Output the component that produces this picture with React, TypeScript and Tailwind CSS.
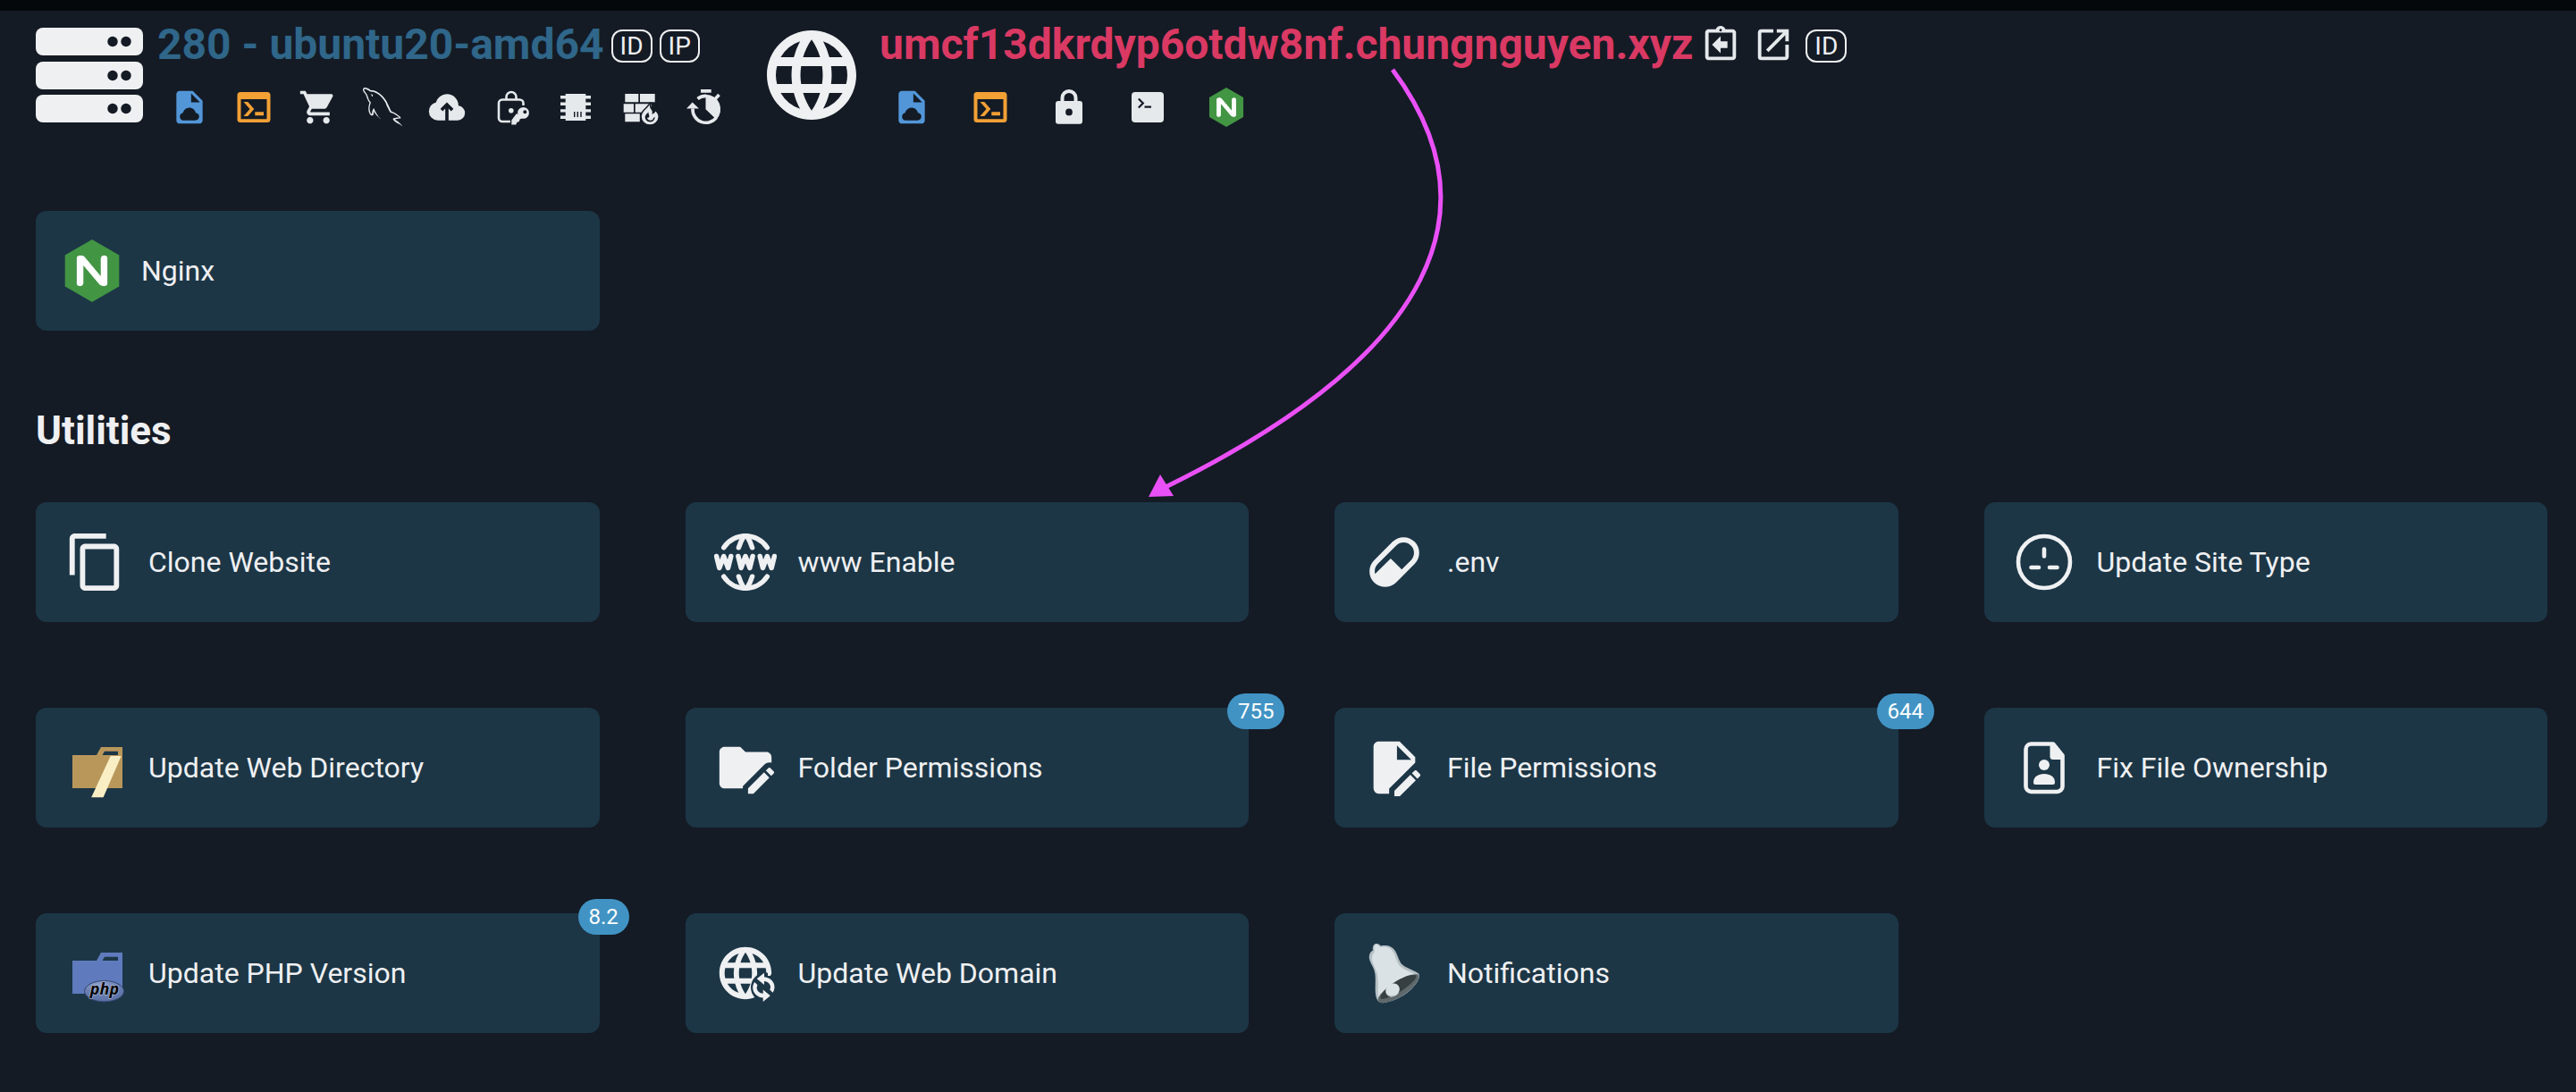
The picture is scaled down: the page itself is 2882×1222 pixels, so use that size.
import type { ReactNode } from "react";
import { MdContentCopy, MdLanguage, MdOpenInNew, MdOutlineAssignmentReturn, MdShoppingCart } from "react-icons/md";
import { GrMysql } from "react-icons/gr";
import { SiNginx } from "react-icons/si";
import { TbWorldWww } from "react-icons/tb";

const BG = "#141b25";
const CARD = "#1c3646";

function Small({ children, box = "0 0 44 44" }: { children: ReactNode; box?: string }) {
  return (
    <svg viewBox={box} className="size-11" fill="currentColor" aria-hidden="true">
      {children}
    </svg>
  );
}

function Large({ children, box = "0 0 70 70" }: { children: ReactNode; box?: string }) {
  return (
    <svg viewBox={box} className="size-[70px] shrink-0" fill="currentColor" aria-hidden="true">
      {children}
    </svg>
  );
}

const FileCloud = () => (
  <Small box="0 0 24 24">
    <path
      fill="#5296d8"
      fillRule="evenodd"
      d="M6 2C4.900 2 4 2.900 4 4v16c0 1.100.9 2 2 2h12c1.100 0 2-.9 2-2V8l-6-6H6Zm7 1.600L18.400 9H13V3.600ZM8.300 20C7 20 6.100 19 6.100 17.700c0-1.200.8-2.100 1.900-2.300.6-1.900 2-3.100 3.900-3.100 2 0 3.500 1.300 3.900 3.100 1.200.1 2.100 1 2.100 2.200 0 1.400-1 2.400-2.400 2.400H8.300Z"
    />
  </Small>
);

const TerminalWindow = () => (
  <Small>
    <path
      fill="#f3a035"
      fillRule="evenodd"
      d="M7 5h30a3.500 3.500 0 0 1 3.500 3.500v27A3.500 3.500 0 0 1 37 39H7a3.500 3.500 0 0 1-3.500-3.500v-27A3.500 3.500 0 0 1 7 5Zm.5 8v22.300h29V13h-29Z"
    />
    <path fill="#f3a035" d="M10.500 16h4.800l7 8-7 8h-4.800l7-8zM23.300 27.300H33v4h-9.700z" />
  </Small>
);

const CloudUpload = () => (
  <Small box="0 0 24 24">
    <path d="M11 20H6.500Q4.220 20 2.610 18.430 1 16.850 1 14.580 1 12.630 2.170 11.100 3.350 9.570 5.250 9.150 5.880 6.850 7.750 5.430 9.630 4 12 4 14.930 4 16.960 6.040 19 8.070 19 11 20.730 11.200 21.860 12.500 23 13.780 23 15.500 23 17.380 21.690 18.690 20.380 20 18.500 20H13V12.850L14.600 14.400 16 13 12 9 8 13 9.400 14.400 11 12.850Z" />
  </Small>
);

const LockKey = () => (
  <Small>
    <path
      fill="none"
      stroke="currentColor"
      strokeWidth="2.600"
      d="M35.500 20v-2.500a4 4 0 0 0-4-4H12a4 4 0 0 0-4 4v16.500a4 4 0 0 0 4 4h9M16.500 13v-2.500a5.500 5.500 0 0 1 11 0V13"
    />
    <circle cx="21.800" cy="25.800" r="2.800" />
    <path d="M28 29 22.300 36.500v5h5l1-2.500 2.500-1 .8-2.500 3-1.500z" />
    <path fillRule="evenodd" d="M35.500 22a6.400 6.400 0 1 0 0 12.800 6.400 6.400 0 0 0 0-12.800Zm1.800 3.200a2 2 0 1 1 0 4 2 2 0 0 1 0-4Z" />
  </Small>
);

const Chip = () => (
  <Small>
    <path d="M10.700 7h22.600v30H10.700zM5 9h34v3.400H5zM5 16.600h34V20H5zM5 24.300h34v3.300H5zM5 31.600h34V35H5z" />
    <path stroke={BG} strokeWidth="1.400" d="M20.700 27v6M24.300 27v6M28 27v6" />
  </Small>
);

const Firewall = () => (
  <Small>
    <path d="M5.300 7h15v9.300h-15zM22 7h16.700v9.300H22zM3.700 18.300H15v9.400H3.700zM16.700 18.300h18v9.400h-18zM5.300 29.300h16.500v9H5.300z" />
    <path
      stroke={BG}
      strokeWidth="1.500"
      d="M34.500 16.500c-1.500 3-1 5.500.8 7.800 1 1.300 1.800 2.400 1.200 4.200 1.500-.6 2.300-1.700 2.300-3.500 2.700 2.300 4.400 4.900 4.400 7.500 0 5.300-4.500 9.500-10 9.500s-10.200-4.200-10.200-9.500c0-5.600 4.300-8 6.500-10.500 1.700-1.900 3-3.800 5-5.500Z"
    />
    <path
      fill={BG}
      d="M31.500 27.500c-.5 2 1.300 3 .8 4.900-.3 1.300-1.500 1.800-2.400 1.200.3 1.900 1.600 3.200 3.600 3.200 2.100 0 3.500-1.300 3.500-3.100.9.3 1.400-.2 1.600-1.100.3 3.400-2 5.900-5.200 5.900-3.300 0-5.700-2.400-5.700-5.400 0-2.500 2.100-4 3.800-5.600Z"
    />
  </Small>
);

const Stopwatch = () => (
  <Small>
    <path d="M18 2h11.700v3.700H18zM8.700 16.500 16 23.500H2zM23.500 24.300V7.800a16.500 16.500 0 0 1 12 28z" />
    <path fill="none" stroke="currentColor" strokeWidth="3.600" d="M9 23.500a14.800 14.800 0 0 0 26.500 10M14.500 12.500A15 15 0 0 1 24 9.400M33.500 13.500l5-5.500" />
  </Small>
);

const Padlock = () => (
  <Small>
    <path
      fillRule="evenodd"
      d="M10 15h24a3 3 0 0 1 3 3v19.700a3 3 0 0 1-3 3H10a3 3 0 0 1-3-3V18a3 3 0 0 1 3-3Zm12 8.500a3.900 3.900 0 1 0 0 7.800 3.900 3.900 0 0 0 0-7.800Z"
    />
    <path fill="none" stroke="currentColor" strokeWidth="4" d="M14.500 17v-5.500a7.500 7.500 0 0 1 15 0V17" />
  </Small>
);

const TerminalSolid = () => (
  <Small>
    <rect x="4" y="5" width="36" height="34" rx="4" />
    <path fill="none" stroke={BG} strokeWidth="2.200" d="m11.800 12.500 5 5-5 5M18.500 21.700h7.500" />
  </Small>
);

const NginxLogo = ({ className }: { className: string }) => (
  <span className={`grid shrink-0 place-items-center ${className}`}>
    <svg viewBox="1.500 0 21 24" className="h-full w-full" aria-hidden="true">
      <rect x="6" y="6" width="12" height="12" fill="#fff" />
      <SiNginx x="0" y="0" size="24" color="#429543" />
    </svg>
  </span>
);

const Server = () => (
  <svg viewBox="0 0 120 120" className="size-[120px] shrink-0" aria-hidden="true">
    {[7, 45, 82].map((y) => (
      <g key={y}>
        <rect x="0" y={y} width="120" height="31" rx="8" fill="#eff0f2" />
        <circle cx="86" cy={y + 15.500} r="5.700" fill={BG} />
        <circle cx="101" cy={y + 15.500} r="5.700" fill={BG} />
      </g>
    ))}
  </svg>
);

const Pill = () => (
  <Large box="0 0 24 24">
    <path
      fillRule="evenodd"
      d="M4.220 11.290 11.290 4.220C13.640 1.880 17.430 1.880 19.780 4.220 22.120 6.560 22.120 10.360 19.780 12.710L12.710 19.780C10.360 22.120 6.560 22.120 4.220 19.780 1.880 17.430 1.880 13.640 4.220 11.290M5.640 12.710C4.590 13.750 4.240 15.240 4.600 16.570L10.590 10.590 14.830 14.830 18.360 11.290C19.930 9.730 19.930 7.200 18.360 5.640 16.800 4.070 14.270 4.070 12.710 5.640L5.640 12.710Z"
    />
  </Large>
);

const Socket = () => (
  <Large>
    <g fill="none" stroke="currentColor" strokeWidth="4.600" strokeLinecap="round">
      <circle cx="35" cy="35" r="29" />
      <path d="M35 20.500v8M20.500 41h8.500M41 41h8.500" />
    </g>
  </Large>
);

const FolderShape = ({ color }: { color: string }) => (
  <path fill={color} fillRule="evenodd" d="M9 21h27l5-9h24v46H9zM42.500 21H60v-4.300H45z" />
);

const SlashFolder = () => (
  <Large>
    <FolderShape color="#b9975b" />
    <path fill="#faefc4" d="M51.700 21.900h12L43.600 68.300H30.200z" />
  </Large>
);

const PhpFolder = () => (
  <Large>
    <defs>
      <radialGradient id="php-oval" cx="0.4" cy="0.2" r="0.900">
        <stop offset="0" stopColor="#8fa3cc" />
        <stop offset="0.5" stopColor="#6a80b3" />
        <stop offset="1" stopColor="#566c9f" />
      </radialGradient>
    </defs>
    <FolderShape color="#5f7bbd" />
    <ellipse cx="44.600" cy="55.200" rx="22" ry="11.700" fill="url(#php-oval)" stroke="#34466e" strokeWidth="1" />
    <text
      x="45"
      y="59"
      textAnchor="middle"
      fontSize="18"
      fontWeight="700"
      fontStyle="italic"
      fontFamily="Open Sans, sans-serif"
      fill="#000"
      stroke="#c5cfe4"
      strokeWidth="1"
      paintOrder="stroke"
    >
      php
    </text>
  </Large>
);

const FolderEdit = () => (
  <Large box="0 0 24 24">
    <path d="M19.390 10.740 11 19.130V20H4C2.900 20 2 19.110 2 18V6C2 4.890 2.890 4 4 4H10L12 6H20C21.100 6 22 6.890 22 8V10.150C21.740 10.060 21.460 10 21.170 10 20.500 10 19.870 10.260 19.390 10.740M13 19.960V22H15.040L21.170 15.880 19.130 13.830 13 19.960M22.850 13.470 21.530 12.150C21.330 11.950 21 11.950 20.810 12.150L19.830 13.130 21.870 15.170 22.850 14.190C23.050 14 23.050 13.670 22.850 13.470Z" />
  </Large>
);

const FileEdit = () => (
  <Large box="0 0 24 24">
    <path
      fillRule="evenodd"
      d="M6 2C4.890 2 4 2.890 4 4V20A2 2 0 0 0 6 22H10V20.090L20 10.090V8L14 2H6M13 3.500 18.500 9H13V3.500M20.150 13C20 13 19.860 13.050 19.750 13.160L18.730 14.180 20.820 16.260 21.840 15.250C22.050 15.030 22.050 14.670 21.840 14.460L20.540 13.160C20.430 13.050 20.290 13 20.150 13M18.140 14.770 12 20.920V23H14.080L20.230 16.850 18.140 14.770Z"
    />
  </Large>
);

const FilePerson = () => (
  <Large>
    <path
      fill="none"
      stroke="currentColor"
      strokeWidth="4.600"
      strokeLinejoin="round"
      d="M20 8.500h25l10.500 13v34.500a6 6 0 0 1-6 6H20.500a6 6 0 0 1-6-6V14.500a6 6 0 0 1 6-6z"
    />
    <path d="M41.500 9H46l11 14v3H45a3.500 3.500 0 0 1-3.500-3.500z" />
    <circle cx="35" cy="32" r="6" />
    <path d="M23 51.500c0-6 5-9.500 12-9.500s12 3.500 12 9.500c0 1.700-.8 2.500-2.500 2.500h-19c-1.700 0-2.500-.8-2.500-2.500Z" />
  </Large>
);

const WebSync = () => (
  <Large>
    <MdLanguage size="70" x="0" y="0" />
    <circle cx="57.500" cy="51" r="16.500" fill={CARD} />
    <path d="M60 33.500 64.200 35 63 38H60z" />
    <path d="M47.700 41.300 56 34.700v4.500c6.500.5 11.500 5.300 11.500 11.300 0 2.300-.7 4.500-2 6.300l-3.300-3.300c.5-.9.8-1.900.8-3 0-3.400-3-6.200-7-6.600v4z" />
    <path d="M62.800 60.300 54.700 67v-4.500c-6.500-.5-11.500-5.300-11.500-11.300 0-2.300.7-4.500 2-6.300l3.300 3.300c-.5.9-.8 1.900-.8 3 0 3.400 3 6.200 7 6.600v-4.300z" />
  </Large>
);

const Bell = () => (
  <Large>
    <path fill="#b4bfc4" d="M14.500 2c3-.5 4 1.500 5.500 2.500 3.500-.8 7.500-.5 10 .5 5 2.500 7 6 9.300 12.500 2 5.500 3.700 8 8.200 10.500 6 3 10.500 4.500 14 7 2.500 2 1.500 6-1 10-7 11-21 20.500-36.500 23-5 .8-7.500-.5-9-5-2.500-8-.5-17-1.500-26.500C12.500 28 8 24.500 7 19c-.8-4.500 1-8 4-9.500-.5-3 0-7 3.500-7.500Z" />
    <path fill="#dbe2e5" d="M14.500 3c2-.3 2.500 1.500 5.500 3 3-.8 6-.6 8.500.5 4.500 2 6.500 6.500 8.500 12.500 2 6 4 8.700 9 11.500 5 2.500 9 4 12 6-15 4-31 14-41 27-.8-8 .7-16.500-1-26.500C14.500 29.500 10 24.500 10 18.500c0-3.500 1.300-6 3-7.500-.8-3-.8-7.500 1.500-8Z" />
    <path fill="#5f696c" d="M61.500 36.500c2.500 2.500 0 8-6.500 15C45 61.500 30 69 19.500 68c-4-.5-3.500-5 0-9.500C29 47.500 50 34 61.500 36.500Z" />
    <path fill="#363f41" d="M59 37.500c2 2-3 8-12 14.500-9 6.500-20.500 12-26.500 12C17 62 22 55 31.500 48 41 41 54 35.500 59 37.500Z" />
    <ellipse cx="33" cy="54" rx="8.200" ry="7" transform="rotate(-35 33 54)" fill="#dbe2e5" />
    <path fill="#b4bfc4" d="M26.500 57c1.500 3 6 4.500 10 1.500-3 4.500-9 4-10-1.500Z" />
  </Large>
);

function IconButton({ label, children }: { label: string; children: ReactNode }) {
  return (
    <button type="button" aria-label={label} className="block text-[#e6e9ec]">
      {children}
    </button>
  );
}

function Tag({ children }: { children: string }) {
  return (
    <button
      type="button"
      className="mb-2 self-end rounded-xl border-2 border-[#eff0f2] px-2 text-[28px] leading-[33px]"
    >
      {children}
    </button>
  );
}

function Card({ icon, label, badge }: { icon: ReactNode; label: string; badge?: string }) {
  return (
    <div className="relative">
      <button
        type="button"
        className="flex h-[134px] w-full items-center gap-6 rounded-xl bg-[#1c3646] px-8 text-left text-[32px] leading-10"
      >
        {icon}
        <span>{label}</span>
      </button>
      {badge && (
        <span className="absolute -top-4 left-full -ml-6 rounded-full bg-[#4193c4] px-3 text-2xl leading-10 text-white">
          {badge}
        </span>
      )}
    </div>
  );
}

const utilities: { icon: ReactNode; label: string; badge?: string }[] = [
  { icon: <MdContentCopy className="size-[70px] shrink-0" />, label: "Clone Website" },
  {
    icon: <TbWorldWww viewBox="1.200 1.200 21.600 21.600" strokeWidth="1.700" className="size-[70px] shrink-0" />,
    label: "www Enable",
  },
  { icon: <Pill />, label: ".env" },
  { icon: <Socket />, label: "Update Site Type" },
  { icon: <SlashFolder />, label: "Update Web Directory" },
  { icon: <FolderEdit />, label: "Folder Permissions", badge: "755" },
  { icon: <FileEdit />, label: "File Permissions", badge: "644" },
  { icon: <FilePerson />, label: "Fix File Ownership" },
  { icon: <PhpFolder />, label: "Update PHP Version", badge: "8.2" },
  { icon: <WebSync />, label: "Update Web Domain" },
  { icon: <Bell />, label: "Notifications" },
];

export default function App() {
  return (
    <div className="relative min-h-screen border-t-12 border-[#04080b] bg-[#141b25] pt-2.5 pr-8 pb-16 pl-10 font-[Roboto,sans-serif] text-[#eff0f2]">
      <header className="flex items-end gap-[38px]">
        <section className="flex items-end gap-4">
          <Server />
          <div className="flex flex-col gap-5 pb-0.5">
            <div className="flex items-center gap-2">
              <a href="#server" className="text-5xl leading-14 font-bold text-[#2f6689]">
                280 - ubuntu20-amd64
              </a>
              <Tag>ID</Tag>
              <Tag>IP</Tag>
            </div>
            <nav aria-label="Server" className="flex gap-7 pl-3.5">
              <IconButton label="Server files"><FileCloud /></IconButton>
              <IconButton label="Server terminal"><TerminalWindow /></IconButton>
              <IconButton label="Store"><MdShoppingCart className="size-11" /></IconButton>
              <IconButton label="MySQL"><GrMysql className="size-11" /></IconButton>
              <IconButton label="Backup"><CloudUpload /></IconButton>
              <IconButton label="Keys"><LockKey /></IconButton>
              <IconButton label="Memory"><Chip /></IconButton>
              <IconButton label="Firewall"><Firewall /></IconButton>
              <IconButton label="Cron jobs"><Stopwatch /></IconButton>
            </nav>
          </div>
        </section>
        <section className="flex items-end gap-4">
          <MdLanguage className="size-[120px] shrink-0" />
          <div className="flex flex-col gap-5 pb-0.5">
            <div className="flex items-center gap-[13px]">
              <div className="flex items-center gap-2">
                <a href="#website" className="text-5xl leading-14 font-bold text-[#d93963]">
                  umcf13dkrdyp6otdw8nf.chungnguyen.xyz
                </a>
                <IconButton label="Copy domain"><MdOutlineAssignmentReturn className="size-[46px]" /></IconButton>
              </div>
              <IconButton label="Open website"><MdOpenInNew className="size-[46px]" /></IconButton>
              <Tag>ID</Tag>
            </div>
            <nav aria-label="Website" className="flex gap-11 pl-3.5">
              <IconButton label="Website files"><FileCloud /></IconButton>
              <IconButton label="Website terminal"><TerminalWindow /></IconButton>
              <IconButton label="SSL"><Padlock /></IconButton>
              <IconButton label="Commands"><TerminalSolid /></IconButton>
              <IconButton label="Nginx config"><NginxLogo className="size-11" /></IconButton>
            </nav>
          </div>
        </section>
      </header>

      <main>
        <div className="mt-[92px] grid grid-cols-4 gap-24">
          <Card icon={<NginxLogo className="h-[70px] w-[62px]" />} label="Nginx" />
        </div>
        <h2 className="mt-[86px] text-[44px] leading-[52px] font-bold">Utilities</h2>
        <div className="mt-[54px] grid grid-cols-4 gap-24">
          {utilities.map((item) => (
            <Card key={item.label} {...item} />
          ))}
        </div>
      </main>

      {/* Annotation arrow from the domain name to the "www Enable" card */}
      <svg
        viewBox="0 0 340 490"
        className="pointer-events-none absolute top-[58px] left-[1280px] h-[490px] w-[340px]"
        fill="none"
        aria-hidden="true"
      >
        <path stroke="#ea50f8" strokeWidth="5" d="M278 8C393 162 330 325 24 475" />
        <path fill="#ea50f8" d="m5 486 13-25 15 24z" />
      </svg>
    </div>
  );
}
